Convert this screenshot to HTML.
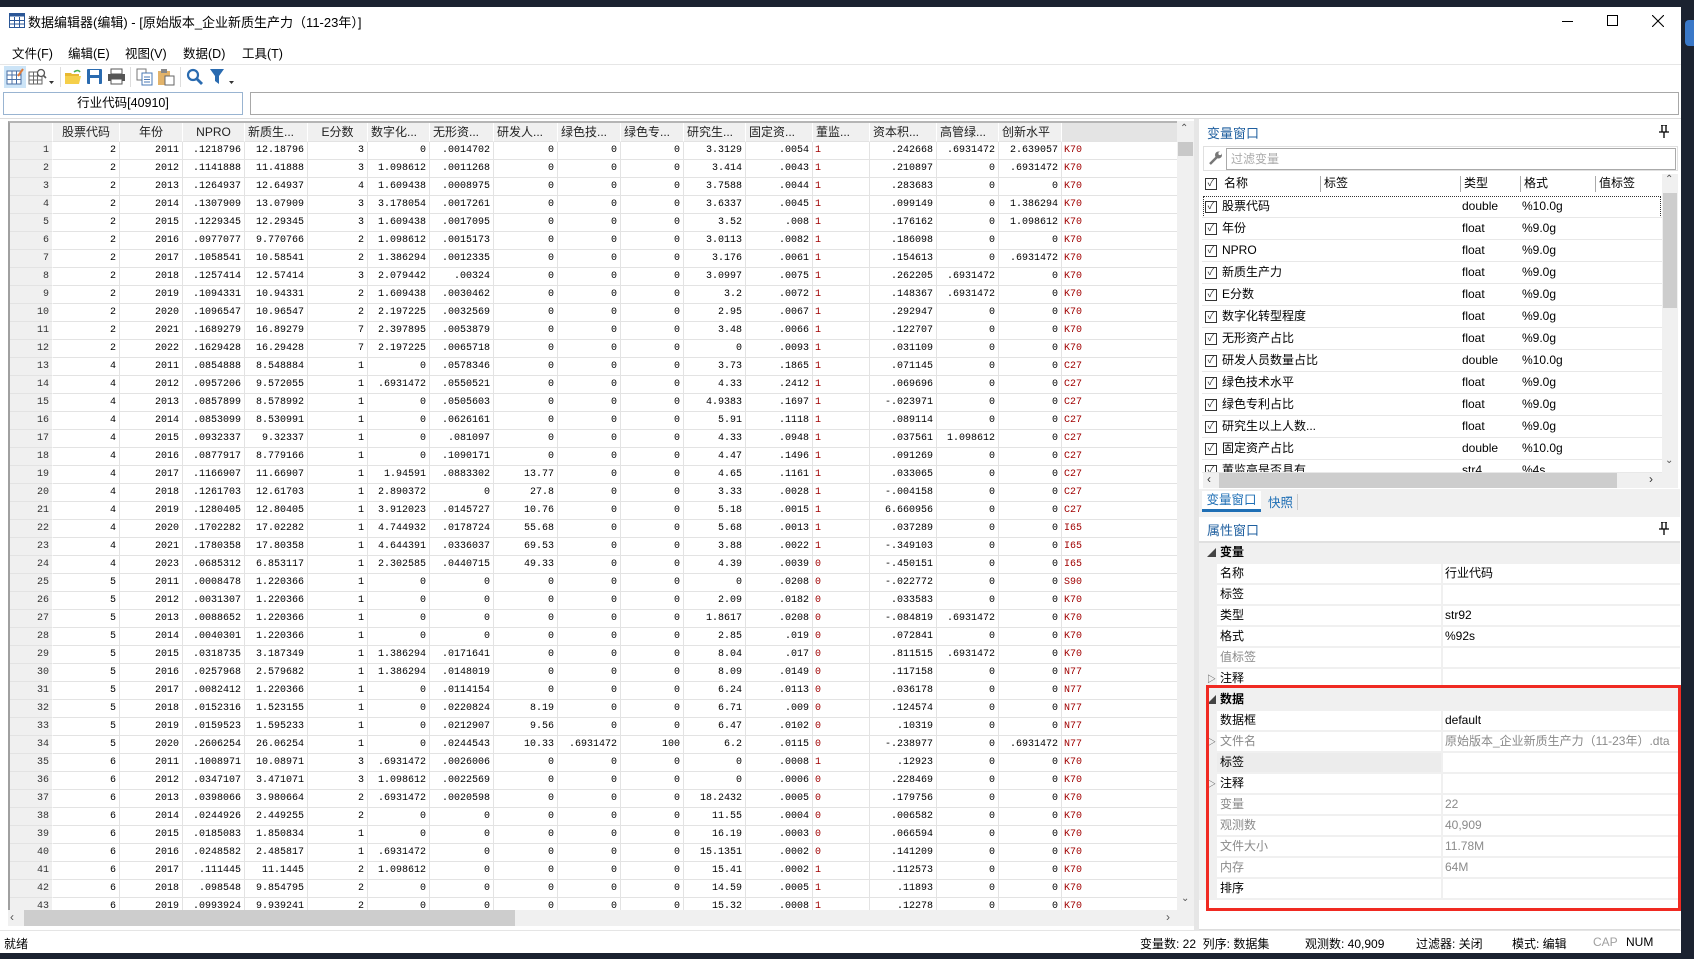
<!DOCTYPE html>
<html><head><meta charset="utf-8">
<style>
*{box-sizing:border-box;margin:0;padding:0}
body{width:1694px;height:959px;overflow:hidden;background:#1b2230;position:relative;font-family:"Liberation Sans","Noto Sans CJK SC",sans-serif;font-size:12px;color:#000}
.a{position:absolute}
#win{left:0;top:7px;width:1681px;height:946px;background:#fff}
.mono{font-family:"Liberation Mono","Noto Sans CJK SC",monospace}
#grid{left:8px;top:121px;width:1170px;height:789px;overflow:hidden;background:#fff;border-left:2px solid #a0a0a0;border-top:2px solid #b5b5b5}
table{border-collapse:separate;border-spacing:0;table-layout:fixed;width:1171px}
td,th{height:17px;border-right:1px solid #e3e3e3;border-bottom:1px solid #e3e3e3;padding:0 3px;white-space:nowrap;overflow:hidden;text-align:right;font-family:"Liberation Mono","Noto Sans CJK SC",monospace;font-size:10px;line-height:17px;font-weight:normal}
thead th{background:#f0f0f0;height:18px;text-align:center;font-family:"Liberation Sans","Noto Sans CJK SC",sans-serif;font-size:12px;line-height:18px;border-right:1px solid #fff;color:#222}
tbody th{background:#f0f0f0;color:#333;border-right:1px solid #fff}
td.r{text-align:left;color:#a00000;padding-left:2px}
.vs{left:1177px;top:121px;width:17px;height:789px;background:#f0f0f0}
.cb{display:inline-block;width:12px;height:12px;border:1px solid #333;position:absolute;font-size:10px;line-height:10px;text-align:center;color:#333}
.vr{position:absolute;left:1202px;width:460px;height:22px;border-bottom:1px solid #e8e8e8;font-size:12px;line-height:21px}
.vr span{position:absolute}
.pr{position:absolute;left:1199px;width:481px;height:21px;border-bottom:2px solid #f0f0f0;font-size:12px;line-height:19px}
.pr .g{position:absolute;left:0;top:0;width:18px;height:21px;background:#f0f0f0}
.pr .l{position:absolute;left:21px}
.pr .v{position:absolute;left:246px}
.pr .sep{position:absolute;left:242px;top:0;width:2px;height:21px;background:#f0f0f0}
.sec{background:#f0f0f0;font-weight:bold}
.gr{color:#8a8a8a}
.tri{position:absolute;left:8px;font-size:9px;color:#444}
</style></head><body>
<div id="win" class="a"></div>
<!-- title bar -->
<svg class="a" style="left:9px;top:13px" width="16" height="15"><rect x="0.5" y="0.5" width="15" height="14" fill="#fff" stroke="#2b5797"/><rect x="0.5" y="0.5" width="15" height="3" fill="#2b5797"/><path d="M0 7.5H16M0 11H16M5.5 4V15M10.5 4V15" stroke="#2b5797"/></svg>
<div class="a" style="left:28px;top:12px;font-size:13px">数据编辑器(编辑) - [原始版本_企业新质生产力（11-23年）]</div>
<div class="a" style="left:1562px;top:21px;width:11px;height:1px;background:#000"></div>
<div class="a" style="left:1607px;top:15px;width:11px;height:11px;border:1px solid #000"></div>
<svg class="a" style="left:1652px;top:15px" width="12" height="12"><path d="M0 0L12 12M12 0L0 12" stroke="#000" stroke-width="1.1"/></svg>
<!-- menu -->
<div class="a" style="left:12px;top:43px;font-size:12.5px">文件(F)</div>
<div class="a" style="left:68px;top:43px;font-size:12.5px">编辑(E)</div>
<div class="a" style="left:125px;top:43px;font-size:12.5px">视图(V)</div>
<div class="a" style="left:183px;top:43px;font-size:12.5px">数据(D)</div>
<div class="a" style="left:242px;top:43px;font-size:12.5px">工具(T)</div>
<!-- toolbar -->
<div class="a" style="left:0;top:64px;width:1681px;height:1px;background:#e6e6e6"></div>
<div class="a" style="left:4px;top:66px;width:22px;height:22px;background:#cce4f7"></div>
<svg class="a" style="left:6px;top:68px" width="18" height="18"><rect x="1" y="3" width="14" height="13" fill="#fff" stroke="#4a6fa5"/><path d="M1 7H15M1 11.5H15M6 3V16M10.5 3V16" stroke="#4a6fa5"/><path d="M12 8L17 1" stroke="#e07b39" stroke-width="2"/></svg>
<svg class="a" style="left:28px;top:68px" width="26" height="18"><rect x="1" y="4" width="13" height="12" fill="#fff" stroke="#666"/><path d="M1 8H14M1 12H14M5.5 4V16M9.5 4V16" stroke="#666"/><circle cx="13" cy="5" r="3.5" fill="#fff" stroke="#555" stroke-width="1.3"/><path d="M15.5 7.5L18 10" stroke="#555" stroke-width="1.6"/><path d="M21 13H26L23.5 16Z" fill="#333"/></svg>
<div class="a" style="left:60px;top:67px;width:1px;height:20px;background:#ddd"></div>
<svg class="a" style="left:64px;top:68px" width="18" height="18"><path d="M1 5H7L8 6H15V16H1Z" fill="#e8b830"/><path d="M1 8H17L15 16H1Z" fill="#f5cf4a"/><path d="M10 4Q14 1 16 4" stroke="#4caf50" stroke-width="1.6" fill="none"/></svg>
<svg class="a" style="left:86px;top:68px" width="17" height="17"><rect x="1" y="1" width="15" height="15" rx="1" fill="#2a6bb0"/><rect x="4" y="2" width="9" height="5" fill="#fff"/><rect x="4" y="10" width="9" height="6" fill="#fff"/></svg>
<svg class="a" style="left:107px;top:68px" width="19" height="17"><rect x="4" y="1" width="11" height="5" fill="#fff" stroke="#555"/><rect x="1" y="6" width="17" height="7" fill="#555"/><rect x="4" y="11" width="11" height="5" fill="#fff" stroke="#555"/></svg>
<div class="a" style="left:130px;top:67px;width:1px;height:20px;background:#ddd"></div>
<svg class="a" style="left:136px;top:68px" width="17" height="18"><rect x="1" y="1" width="9" height="11" fill="#fff" stroke="#777"/><rect x="6" y="5" width="10" height="12" fill="#fff" stroke="#4a78b5"/><path d="M8 9H14M8 11.5H14M8 14H14" stroke="#4a78b5"/></svg>
<svg class="a" style="left:157px;top:68px" width="18" height="18"><rect x="1" y="3" width="12" height="14" fill="#e2b36a"/><rect x="4" y="1" width="6" height="4" fill="#888"/><rect x="8" y="8" width="9" height="9" fill="#fff" stroke="#666"/></svg>
<div class="a" style="left:180px;top:67px;width:1px;height:20px;background:#ddd"></div>
<svg class="a" style="left:186px;top:68px" width="18" height="18"><circle cx="7" cy="7" r="5" fill="none" stroke="#2a6bb0" stroke-width="2.2"/><path d="M10.5 10.5L16 16" stroke="#2a6bb0" stroke-width="2.8"/></svg>
<svg class="a" style="left:209px;top:68px" width="26" height="18"><path d="M1 1H15L10 8V16L6 13V8Z" fill="#2a6bb0"/><path d="M20 13H25L22.5 16Z" fill="#333"/></svg>
<!-- name boxes -->
<div class="a" style="left:3px;top:92px;width:240px;height:23px;border:1px solid #99b4d1;text-align:center;line-height:21px;font-size:12.5px">行业代码[40910]</div>
<div class="a" style="left:250px;top:92px;width:1429px;height:23px;border:1px solid #a8a8a8"></div>
<div class="a" style="left:0;top:118px;width:1681px;height:1px;background:#ddd"></div>
<!-- grid -->
<div id="grid" class="a">
<table>
<colgroup><col style="width:43px"><col style="width:67px"><col style="width:63px"><col style="width:62px"><col style="width:63px"><col style="width:60px"><col style="width:62px"><col style="width:64px"><col style="width:64px"><col style="width:63px"><col style="width:63px"><col style="width:62px"><col style="width:67px"><col style="width:57px"><col style="width:67px"><col style="width:62px"><col style="width:63px"><col style="width:119px"></colgroup>
<thead><tr><th></th><th>股票代码</th><th>年份</th><th>NPRO</th><th style="text-align:left">新质生...</th><th>E分数</th><th style="text-align:left">数字化...</th><th style="text-align:left">无形资...</th><th style="text-align:left">研发人...</th><th style="text-align:left">绿色技...</th><th style="text-align:left">绿色专...</th><th style="text-align:left">研究生...</th><th style="text-align:left">固定资...</th><th style="text-align:left">董监...</th><th style="text-align:left">资本积...</th><th style="text-align:left">高管绿...</th><th style="text-align:left">创新水平</th><th style="background:#e4e4e4"></th></tr></thead>
<tbody>
<tr><th>1</th><td>2</td><td>2011</td><td>.1218796</td><td>12.18796</td><td>3</td><td>0</td><td>.0014702</td><td>0</td><td>0</td><td>0</td><td>3.3129</td><td>.0054</td><td class="r">1</td><td>.242668</td><td>.6931472</td><td>2.639057</td><td class="r">K70</td></tr>
<tr><th>2</th><td>2</td><td>2012</td><td>.1141888</td><td>11.41888</td><td>3</td><td>1.098612</td><td>.0011268</td><td>0</td><td>0</td><td>0</td><td>3.414</td><td>.0043</td><td class="r">1</td><td>.210897</td><td>0</td><td>.6931472</td><td class="r">K70</td></tr>
<tr><th>3</th><td>2</td><td>2013</td><td>.1264937</td><td>12.64937</td><td>4</td><td>1.609438</td><td>.0008975</td><td>0</td><td>0</td><td>0</td><td>3.7588</td><td>.0044</td><td class="r">1</td><td>.283683</td><td>0</td><td>0</td><td class="r">K70</td></tr>
<tr><th>4</th><td>2</td><td>2014</td><td>.1307909</td><td>13.07909</td><td>3</td><td>3.178054</td><td>.0017261</td><td>0</td><td>0</td><td>0</td><td>3.6337</td><td>.0045</td><td class="r">1</td><td>.099149</td><td>0</td><td>1.386294</td><td class="r">K70</td></tr>
<tr><th>5</th><td>2</td><td>2015</td><td>.1229345</td><td>12.29345</td><td>3</td><td>1.609438</td><td>.0017095</td><td>0</td><td>0</td><td>0</td><td>3.52</td><td>.008</td><td class="r">1</td><td>.176162</td><td>0</td><td>1.098612</td><td class="r">K70</td></tr>
<tr><th>6</th><td>2</td><td>2016</td><td>.0977077</td><td>9.770766</td><td>2</td><td>1.098612</td><td>.0015173</td><td>0</td><td>0</td><td>0</td><td>3.0113</td><td>.0082</td><td class="r">1</td><td>.186098</td><td>0</td><td>0</td><td class="r">K70</td></tr>
<tr><th>7</th><td>2</td><td>2017</td><td>.1058541</td><td>10.58541</td><td>2</td><td>1.386294</td><td>.0012335</td><td>0</td><td>0</td><td>0</td><td>3.176</td><td>.0061</td><td class="r">1</td><td>.154613</td><td>0</td><td>.6931472</td><td class="r">K70</td></tr>
<tr><th>8</th><td>2</td><td>2018</td><td>.1257414</td><td>12.57414</td><td>3</td><td>2.079442</td><td>.00324</td><td>0</td><td>0</td><td>0</td><td>3.0997</td><td>.0075</td><td class="r">1</td><td>.262205</td><td>.6931472</td><td>0</td><td class="r">K70</td></tr>
<tr><th>9</th><td>2</td><td>2019</td><td>.1094331</td><td>10.94331</td><td>2</td><td>1.609438</td><td>.0030462</td><td>0</td><td>0</td><td>0</td><td>3.2</td><td>.0072</td><td class="r">1</td><td>.148367</td><td>.6931472</td><td>0</td><td class="r">K70</td></tr>
<tr><th>10</th><td>2</td><td>2020</td><td>.1096547</td><td>10.96547</td><td>2</td><td>2.197225</td><td>.0032569</td><td>0</td><td>0</td><td>0</td><td>2.95</td><td>.0067</td><td class="r">1</td><td>.292947</td><td>0</td><td>0</td><td class="r">K70</td></tr>
<tr><th>11</th><td>2</td><td>2021</td><td>.1689279</td><td>16.89279</td><td>7</td><td>2.397895</td><td>.0053879</td><td>0</td><td>0</td><td>0</td><td>3.48</td><td>.0066</td><td class="r">1</td><td>.122707</td><td>0</td><td>0</td><td class="r">K70</td></tr>
<tr><th>12</th><td>2</td><td>2022</td><td>.1629428</td><td>16.29428</td><td>7</td><td>2.197225</td><td>.0065718</td><td>0</td><td>0</td><td>0</td><td>0</td><td>.0093</td><td class="r">1</td><td>.031109</td><td>0</td><td>0</td><td class="r">K70</td></tr>
<tr><th>13</th><td>4</td><td>2011</td><td>.0854888</td><td>8.548884</td><td>1</td><td>0</td><td>.0578346</td><td>0</td><td>0</td><td>0</td><td>3.73</td><td>.1865</td><td class="r">1</td><td>.071145</td><td>0</td><td>0</td><td class="r">C27</td></tr>
<tr><th>14</th><td>4</td><td>2012</td><td>.0957206</td><td>9.572055</td><td>1</td><td>.6931472</td><td>.0550521</td><td>0</td><td>0</td><td>0</td><td>4.33</td><td>.2412</td><td class="r">1</td><td>.069696</td><td>0</td><td>0</td><td class="r">C27</td></tr>
<tr><th>15</th><td>4</td><td>2013</td><td>.0857899</td><td>8.578992</td><td>1</td><td>0</td><td>.0505603</td><td>0</td><td>0</td><td>0</td><td>4.9383</td><td>.1697</td><td class="r">1</td><td>-.023971</td><td>0</td><td>0</td><td class="r">C27</td></tr>
<tr><th>16</th><td>4</td><td>2014</td><td>.0853099</td><td>8.530991</td><td>1</td><td>0</td><td>.0626161</td><td>0</td><td>0</td><td>0</td><td>5.91</td><td>.1118</td><td class="r">1</td><td>.089114</td><td>0</td><td>0</td><td class="r">C27</td></tr>
<tr><th>17</th><td>4</td><td>2015</td><td>.0932337</td><td>9.32337</td><td>1</td><td>0</td><td>.081097</td><td>0</td><td>0</td><td>0</td><td>4.33</td><td>.0948</td><td class="r">1</td><td>.037561</td><td>1.098612</td><td>0</td><td class="r">C27</td></tr>
<tr><th>18</th><td>4</td><td>2016</td><td>.0877917</td><td>8.779166</td><td>1</td><td>0</td><td>.1090171</td><td>0</td><td>0</td><td>0</td><td>4.47</td><td>.1496</td><td class="r">1</td><td>.091269</td><td>0</td><td>0</td><td class="r">C27</td></tr>
<tr><th>19</th><td>4</td><td>2017</td><td>.1166907</td><td>11.66907</td><td>1</td><td>1.94591</td><td>.0883302</td><td>13.77</td><td>0</td><td>0</td><td>4.65</td><td>.1161</td><td class="r">1</td><td>.033065</td><td>0</td><td>0</td><td class="r">C27</td></tr>
<tr><th>20</th><td>4</td><td>2018</td><td>.1261703</td><td>12.61703</td><td>1</td><td>2.890372</td><td>0</td><td>27.8</td><td>0</td><td>0</td><td>3.33</td><td>.0028</td><td class="r">1</td><td>-.004158</td><td>0</td><td>0</td><td class="r">C27</td></tr>
<tr><th>21</th><td>4</td><td>2019</td><td>.1280405</td><td>12.80405</td><td>1</td><td>3.912023</td><td>.0145727</td><td>10.76</td><td>0</td><td>0</td><td>5.18</td><td>.0015</td><td class="r">1</td><td>6.660956</td><td>0</td><td>0</td><td class="r">C27</td></tr>
<tr><th>22</th><td>4</td><td>2020</td><td>.1702282</td><td>17.02282</td><td>1</td><td>4.744932</td><td>.0178724</td><td>55.68</td><td>0</td><td>0</td><td>5.68</td><td>.0013</td><td class="r">1</td><td>.037289</td><td>0</td><td>0</td><td class="r">I65</td></tr>
<tr><th>23</th><td>4</td><td>2021</td><td>.1780358</td><td>17.80358</td><td>1</td><td>4.644391</td><td>.0336037</td><td>69.53</td><td>0</td><td>0</td><td>3.88</td><td>.0022</td><td class="r">1</td><td>-.349103</td><td>0</td><td>0</td><td class="r">I65</td></tr>
<tr><th>24</th><td>4</td><td>2023</td><td>.0685312</td><td>6.853117</td><td>1</td><td>2.302585</td><td>.0440715</td><td>49.33</td><td>0</td><td>0</td><td>4.39</td><td>.0039</td><td class="r">0</td><td>-.450151</td><td>0</td><td>0</td><td class="r">I65</td></tr>
<tr><th>25</th><td>5</td><td>2011</td><td>.0008478</td><td>1.220366</td><td>1</td><td>0</td><td>0</td><td>0</td><td>0</td><td>0</td><td>0</td><td>.0208</td><td class="r">0</td><td>-.022772</td><td>0</td><td>0</td><td class="r">S90</td></tr>
<tr><th>26</th><td>5</td><td>2012</td><td>.0031307</td><td>1.220366</td><td>1</td><td>0</td><td>0</td><td>0</td><td>0</td><td>0</td><td>2.09</td><td>.0182</td><td class="r">0</td><td>.033583</td><td>0</td><td>0</td><td class="r">K70</td></tr>
<tr><th>27</th><td>5</td><td>2013</td><td>.0088652</td><td>1.220366</td><td>1</td><td>0</td><td>0</td><td>0</td><td>0</td><td>0</td><td>1.8617</td><td>.0208</td><td class="r">0</td><td>-.084819</td><td>.6931472</td><td>0</td><td class="r">K70</td></tr>
<tr><th>28</th><td>5</td><td>2014</td><td>.0040301</td><td>1.220366</td><td>1</td><td>0</td><td>0</td><td>0</td><td>0</td><td>0</td><td>2.85</td><td>.019</td><td class="r">0</td><td>.072841</td><td>0</td><td>0</td><td class="r">K70</td></tr>
<tr><th>29</th><td>5</td><td>2015</td><td>.0318735</td><td>3.187349</td><td>1</td><td>1.386294</td><td>.0171641</td><td>0</td><td>0</td><td>0</td><td>8.04</td><td>.017</td><td class="r">0</td><td>.811515</td><td>.6931472</td><td>0</td><td class="r">K70</td></tr>
<tr><th>30</th><td>5</td><td>2016</td><td>.0257968</td><td>2.579682</td><td>1</td><td>1.386294</td><td>.0148019</td><td>0</td><td>0</td><td>0</td><td>8.09</td><td>.0149</td><td class="r">0</td><td>.117158</td><td>0</td><td>0</td><td class="r">N77</td></tr>
<tr><th>31</th><td>5</td><td>2017</td><td>.0082412</td><td>1.220366</td><td>1</td><td>0</td><td>.0114154</td><td>0</td><td>0</td><td>0</td><td>6.24</td><td>.0113</td><td class="r">0</td><td>.036178</td><td>0</td><td>0</td><td class="r">N77</td></tr>
<tr><th>32</th><td>5</td><td>2018</td><td>.0152316</td><td>1.523155</td><td>1</td><td>0</td><td>.0220824</td><td>8.19</td><td>0</td><td>0</td><td>6.71</td><td>.009</td><td class="r">0</td><td>.124574</td><td>0</td><td>0</td><td class="r">N77</td></tr>
<tr><th>33</th><td>5</td><td>2019</td><td>.0159523</td><td>1.595233</td><td>1</td><td>0</td><td>.0212907</td><td>9.56</td><td>0</td><td>0</td><td>6.47</td><td>.0102</td><td class="r">0</td><td>.10319</td><td>0</td><td>0</td><td class="r">N77</td></tr>
<tr><th>34</th><td>5</td><td>2020</td><td>.2606254</td><td>26.06254</td><td>1</td><td>0</td><td>.0244543</td><td>10.33</td><td>.6931472</td><td>100</td><td>6.2</td><td>.0115</td><td class="r">0</td><td>-.238977</td><td>0</td><td>.6931472</td><td class="r">N77</td></tr>
<tr><th>35</th><td>6</td><td>2011</td><td>.1008971</td><td>10.08971</td><td>3</td><td>.6931472</td><td>.0026006</td><td>0</td><td>0</td><td>0</td><td>0</td><td>.0008</td><td class="r">1</td><td>.12923</td><td>0</td><td>0</td><td class="r">K70</td></tr>
<tr><th>36</th><td>6</td><td>2012</td><td>.0347107</td><td>3.471071</td><td>3</td><td>1.098612</td><td>.0022569</td><td>0</td><td>0</td><td>0</td><td>0</td><td>.0006</td><td class="r">0</td><td>.228469</td><td>0</td><td>0</td><td class="r">K70</td></tr>
<tr><th>37</th><td>6</td><td>2013</td><td>.0398066</td><td>3.980664</td><td>2</td><td>.6931472</td><td>.0020598</td><td>0</td><td>0</td><td>0</td><td>18.2432</td><td>.0005</td><td class="r">0</td><td>.179756</td><td>0</td><td>0</td><td class="r">K70</td></tr>
<tr><th>38</th><td>6</td><td>2014</td><td>.0244926</td><td>2.449255</td><td>2</td><td>0</td><td>0</td><td>0</td><td>0</td><td>0</td><td>11.55</td><td>.0004</td><td class="r">0</td><td>.006582</td><td>0</td><td>0</td><td class="r">K70</td></tr>
<tr><th>39</th><td>6</td><td>2015</td><td>.0185083</td><td>1.850834</td><td>1</td><td>0</td><td>0</td><td>0</td><td>0</td><td>0</td><td>16.19</td><td>.0003</td><td class="r">0</td><td>.066594</td><td>0</td><td>0</td><td class="r">K70</td></tr>
<tr><th>40</th><td>6</td><td>2016</td><td>.0248582</td><td>2.485817</td><td>1</td><td>.6931472</td><td>0</td><td>0</td><td>0</td><td>0</td><td>15.1351</td><td>.0002</td><td class="r">0</td><td>.141209</td><td>0</td><td>0</td><td class="r">K70</td></tr>
<tr><th>41</th><td>6</td><td>2017</td><td>.111445</td><td>11.1445</td><td>2</td><td>1.098612</td><td>0</td><td>0</td><td>0</td><td>0</td><td>15.41</td><td>.0002</td><td class="r">1</td><td>.112573</td><td>0</td><td>0</td><td class="r">K70</td></tr>
<tr><th>42</th><td>6</td><td>2018</td><td>.098548</td><td>9.854795</td><td>2</td><td>0</td><td>0</td><td>0</td><td>0</td><td>0</td><td>14.59</td><td>.0005</td><td class="r">1</td><td>.11893</td><td>0</td><td>0</td><td class="r">K70</td></tr>
<tr><th>43</th><td>6</td><td>2019</td><td>.0993924</td><td>9.939241</td><td>2</td><td>0</td><td>0</td><td>0</td><td>0</td><td>0</td><td>15.32</td><td>.0008</td><td class="r">1</td><td>.12278</td><td>0</td><td>0</td><td class="r">K70</td></tr>
</tbody></table>
</div>
<!-- grid scrollbars -->
<div class="a vs"></div>
<div class="a" style="left:1178px;top:142px;width:15px;height:14px;background:#c8c8c8"></div>
<div class="a" style="left:1180px;top:123px;font-size:10px;color:#555">&#8963;</div>
<div class="a" style="left:1181px;top:893px;font-size:10px;color:#555">&#8964;</div>
<div class="a" style="left:8px;top:910px;width:1186px;height:16px;background:#f0f0f0"></div>
<div class="a" style="left:24px;top:910px;width:491px;height:16px;background:#cdcdcd"></div>
<div class="a" style="left:10px;top:910px;font-size:12px;color:#555">‹</div>
<div class="a" style="left:1166px;top:910px;font-size:12px;color:#555">›</div>
<div class="a" style="left:1194px;top:119px;width:5px;height:812px;background:#e6e6e6"></div>
<!-- right panel -->
<div class="a" style="left:1207px;top:123px;font-size:13px;color:#1f5f9f">变量窗口</div>
<svg class="a" style="left:1659px;top:125px" width="10" height="13"><path d="M2 0H8M3 0V7M7 0V7M0 7H10M5 7V13" stroke="#000" stroke-width="1.3" fill="none"/></svg>
<div class="a" style="left:1203px;top:146px;width:475px;height:25px;border:1px solid #e0e0e0"></div>
<svg class="a" style="left:1207px;top:150px" width="16" height="16"><path d="M3 14L10 7" stroke="#777" stroke-width="2.5"/><circle cx="11.5" cy="5" r="3.5" fill="#777"/><circle cx="13" cy="3.5" r="1.6" fill="#fff"/></svg>
<div class="a" style="left:1226px;top:148px;width:450px;height:22px;border:1px solid #aaa;color:#aaa;font-size:12px;line-height:20px;padding-left:4px">过滤变量</div>
<div class="a" style="left:1202px;top:174px;width:460px;height:20px;font-size:12px;line-height:19px">
<span class="cb" style="left:3px;top:4px">✓</span>
<span class="a" style="left:22px">名称</span>
<span class="a" style="left:118px;top:2px;width:1px;height:16px;background:#aaa"></span><span class="a" style="left:122px">标签</span>
<span class="a" style="left:258px;top:2px;width:1px;height:16px;background:#aaa"></span><span class="a" style="left:262px">类型</span>
<span class="a" style="left:318px;top:2px;width:1px;height:16px;background:#aaa"></span><span class="a" style="left:322px">格式</span>
<span class="a" style="left:393px;top:2px;width:1px;height:16px;background:#aaa"></span><span class="a" style="left:397px">值标签</span>
</div>
<div class="a" style="left:1203px;top:196px;width:458px;height:22px;border:1px dotted #333"></div>
<div class="vr" style="top:196px"><span class="cb" style="left:3px;top:5px">✓</span><span style="left:20px">股票代码</span><span style="left:260px">double</span><span style="left:320px">%10.0g</span></div>
<div class="vr" style="top:218px"><span class="cb" style="left:3px;top:5px">✓</span><span style="left:20px">年份</span><span style="left:260px">float</span><span style="left:320px">%9.0g</span></div>
<div class="vr" style="top:240px"><span class="cb" style="left:3px;top:5px">✓</span><span style="left:20px">NPRO</span><span style="left:260px">float</span><span style="left:320px">%9.0g</span></div>
<div class="vr" style="top:262px"><span class="cb" style="left:3px;top:5px">✓</span><span style="left:20px">新质生产力</span><span style="left:260px">float</span><span style="left:320px">%9.0g</span></div>
<div class="vr" style="top:284px"><span class="cb" style="left:3px;top:5px">✓</span><span style="left:20px">E分数</span><span style="left:260px">float</span><span style="left:320px">%9.0g</span></div>
<div class="vr" style="top:306px"><span class="cb" style="left:3px;top:5px">✓</span><span style="left:20px">数字化转型程度</span><span style="left:260px">float</span><span style="left:320px">%9.0g</span></div>
<div class="vr" style="top:328px"><span class="cb" style="left:3px;top:5px">✓</span><span style="left:20px">无形资产占比</span><span style="left:260px">float</span><span style="left:320px">%9.0g</span></div>
<div class="vr" style="top:350px"><span class="cb" style="left:3px;top:5px">✓</span><span style="left:20px">研发人员数量占比</span><span style="left:260px">double</span><span style="left:320px">%10.0g</span></div>
<div class="vr" style="top:372px"><span class="cb" style="left:3px;top:5px">✓</span><span style="left:20px">绿色技术水平</span><span style="left:260px">float</span><span style="left:320px">%9.0g</span></div>
<div class="vr" style="top:394px"><span class="cb" style="left:3px;top:5px">✓</span><span style="left:20px">绿色专利占比</span><span style="left:260px">float</span><span style="left:320px">%9.0g</span></div>
<div class="vr" style="top:416px"><span class="cb" style="left:3px;top:5px">✓</span><span style="left:20px">研究生以上人数...</span><span style="left:260px">float</span><span style="left:320px">%9.0g</span></div>
<div class="vr" style="top:438px"><span class="cb" style="left:3px;top:5px">✓</span><span style="left:20px">固定资产占比</span><span style="left:260px">double</span><span style="left:320px">%10.0g</span></div>
<div class="vr" style="top:460px;height:13px;overflow:hidden"><span class="cb" style="left:3px;top:5px">✓</span><span style="left:20px">董监高是否具有</span><span style="left:260px">str4</span><span style="left:320px">%4s</span></div>
<div class="a" style="left:1662px;top:174px;width:16px;height:299px;background:#f0f0f0"></div>
<div class="a" style="left:1663px;top:193px;width:14px;height:115px;background:#cdcdcd"></div>
<div class="a" style="left:1665px;top:174px;font-size:10px;color:#555">&#8963;</div>
<div class="a" style="left:1665px;top:455px;font-size:10px;color:#555">&#8964;</div>
<div class="a" style="left:1203px;top:473px;width:475px;height:15px;background:#f0f0f0"></div>
<div class="a" style="left:1219px;top:473px;width:398px;height:15px;background:#cdcdcd"></div>
<div class="a" style="left:1207px;top:472px;font-size:12px;color:#333">‹</div>
<div class="a" style="left:1649px;top:472px;font-size:12px;color:#333">›</div>
<!-- tabs -->
<div class="a" style="left:1199px;top:489px;width:481px;height:28px;background:#f0f0f0"></div>
<div class="a" style="left:1202px;top:491px;width:59px;height:21px;background:#fff;border-bottom:3px solid #1f6fb5;color:#1f6fb5;font-size:12.5px;text-align:center;line-height:18px">变量窗口</div>
<div class="a" style="left:1268px;top:492px;color:#1f6fb5;font-size:12.5px">快照</div>
<div class="a" style="left:1297px;top:494px;width:1px;height:16px;background:#ccc"></div>
<div class="a" style="left:1199px;top:517px;width:481px;height:25px;background:#fff"></div>
<div class="a" style="left:1207px;top:520px;font-size:13px;color:#1f5f9f">属性窗口</div>
<svg class="a" style="left:1659px;top:522px" width="10" height="13"><path d="M2 0H8M3 0V7M7 0V7M0 7H10M5 7V13" stroke="#000" stroke-width="1.3" fill="none"/></svg>
<div class="a" style="left:1199px;top:541px;width:481px;height:2px;background:#e0e0e0"></div>
<!-- property grid -->
<div class="pr sec" style="top:543px"><span class="tri" style="top:1px">◢</span><span class="l">变量</span></div>
<div class="pr" style="top:564px"><span class="g"></span><span class="l">名称</span><span class="sep"></span><span class="v">行业代码</span></div>
<div class="pr" style="top:585px"><span class="g"></span><span class="l">标签</span><span class="sep"></span></div>
<div class="pr" style="top:606px"><span class="g"></span><span class="l">类型</span><span class="sep"></span><span class="v">str92</span></div>
<div class="pr" style="top:627px"><span class="g"></span><span class="l">格式</span><span class="sep"></span><span class="v">%92s</span></div>
<div class="pr" style="top:648px"><span class="g"></span><span class="l gr">值标签</span><span class="sep"></span></div>
<div class="pr" style="top:669px"><span class="g"></span><span class="tri" style="top:1px">▷</span><span class="l">注释</span><span class="sep"></span></div>
<div class="pr sec" style="top:690px"><span class="tri" style="top:1px">◢</span><span class="l">数据</span></div>
<div class="pr" style="top:711px"><span class="g"></span><span class="l">数据框</span><span class="sep"></span><span class="v">default</span></div>
<div class="pr" style="top:732px"><span class="g"></span><span class="tri" style="top:1px">▷</span><span class="l gr">文件名</span><span class="sep"></span><span class="v gr">原始版本_企业新质生产力（11-23年）.dta</span></div>
<div class="pr" style="top:753px"><span class="g"></span><span style="position:absolute;left:18px;top:0;width:224px;height:19px;background:#ececec"></span><span class="l">标签</span><span class="sep"></span></div>
<div class="pr" style="top:774px"><span class="g"></span><span class="tri" style="top:1px">▷</span><span class="l">注释</span><span class="sep"></span></div>
<div class="pr" style="top:795px"><span class="g"></span><span class="l gr">变量</span><span class="sep"></span><span class="v gr">22</span></div>
<div class="pr" style="top:816px"><span class="g"></span><span class="l gr">观测数</span><span class="sep"></span><span class="v gr">40,909</span></div>
<div class="pr" style="top:837px"><span class="g"></span><span class="l gr">文件大小</span><span class="sep"></span><span class="v gr">11.78M</span></div>
<div class="pr" style="top:858px"><span class="g"></span><span class="l gr">内存</span><span class="sep"></span><span class="v gr">64M</span></div>
<div class="pr" style="top:879px"><span class="g"></span><span class="l">排序</span><span class="sep"></span></div>
<div class="a" style="left:1206px;top:685px;width:475px;height:226px;border:3px solid #f02a22"></div>
<div class="a" style="left:1199px;top:929px;width:481px;height:1px;background:#ddd"></div>
<!-- status bar -->
<div class="a" style="left:0;top:930px;width:1681px;height:1px;background:#e5e5e5"></div>
<div class="a" style="left:4px;top:935px;font-size:12px">就绪</div>
<div class="a" style="left:1140px;top:935px;font-size:12px;white-space:pre">变量数: 22  列序: 数据集</div>
<div class="a" style="left:1305px;top:935px;font-size:12px">观测数: 40,909</div>
<div class="a" style="left:1416px;top:935px;font-size:12px">过滤器: 关闭</div>
<div class="a" style="left:1512px;top:935px;font-size:12px">模式: 编辑</div>
<div class="a" style="left:1593px;top:935px;font-size:12px;color:#a0a0a0">CAP</div>
<div class="a" style="left:1626px;top:935px;font-size:12px">NUM</div>
<div class="a" style="left:1685px;top:20px;width:9px;height:26px;background:#3a78c8;border-radius:4px 0 0 4px"></div>
</body></html>
